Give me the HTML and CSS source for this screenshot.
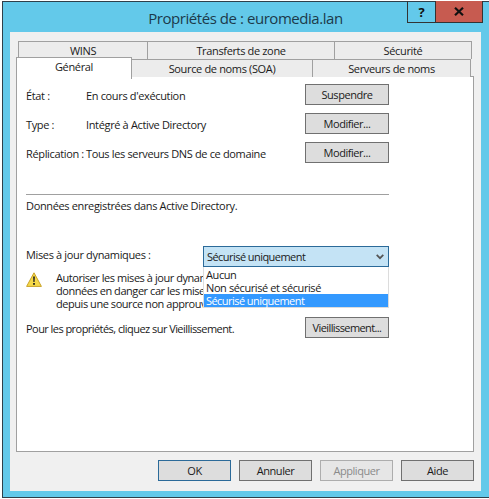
FILE: index.html
```html
<!DOCTYPE html>
<html lang="fr">
<head>
    <meta charset="UTF-8">
    <meta name="viewport" content="width=device-width, initial-scale=1.0">
    <title>Propriétés de : euromedia.lan</title>
    <link rel="stylesheet" href="styles.css">
</head>
<body>
    <div class="window">
        <div class="titlebar">
            <div class="title">Propriétés de : euromedia.lan</div>
            <div class="controls">
                <div class="ctl ctl-help">?</div>
                <div class="ctl ctl-close">
                    <svg width="10" height="9" viewBox="0 0 10 9"><path d="M1 0.8 L9 8.2 M9 0.8 L1 8.2" stroke="#111" stroke-width="2.2" fill="none"/></svg>
                </div>
            </div>
        </div>

        <div class="panel">
            <div class="tabs">
                <div class="tab-row tab-row-back">
                    <div class="tab t-wins">WINS</div>
                    <div class="tab t-transfer">Transferts de zone</div>
                    <div class="tab t-secu">Sécurité</div>
                </div>
                <div class="tab-row">
                    <div class="tab tab-active">Général</div>
                    <div class="tab t-soa">Source de noms (SOA)</div>
                    <div class="tab t-ns">Serveurs de noms</div>
                </div>
            </div>

            <div class="pane">
                <div class="row">
                    <div class="info"><span class="label">État :</span><span>En cours d'exécution</span></div>
                    <button class="btn">Suspendre</button>
                </div>
                <div class="row">
                    <div class="info"><span class="label">Type :</span><span>Intégré à Active Directory</span></div>
                    <button class="btn">Modifier...</button>
                </div>
                <div class="row">
                    <div class="info"><span class="label">Réplication :</span><span>Tous les serveurs DNS de ce domaine</span></div>
                    <button class="btn">Modifier...</button>
                </div>

                <div class="separator"></div>
                <div class="stored">Données enregistrées dans Active Directory.</div>

                <div class="update-row">
                    <span>Mises à jour dynamiques :</span>
                    <div class="combo">
                        <div class="combo-box">
                            <span>Sécurisé uniquement</span>
                            <svg width="8" height="6" viewBox="0 0 8 6"><path d="M0.7 0.8 L4 4.2 L7.3 0.8" stroke="#555" stroke-width="1.7" fill="none"/></svg>
                        </div>
                        <div class="combo-list">
                            <div class="opt">Aucun</div>
                            <div class="opt">Non sécurisé et sécurisé</div>
                            <div class="opt opt-selected">Sécurisé uniquement</div>
                        </div>
                    </div>
                </div>

                <div class="warning">
                    <svg class="warn-icon" width="16" height="15" viewBox="0 0 16 15">
                        <path d="M8 0.8 L15.4 14.4 L0.6 14.4 Z" fill="#f5d94a" stroke="#c9a227" stroke-width="1" stroke-linejoin="round"/>
                        <path d="M7.1 4.6 H8.9 L8.6 10 H7.4 Z" fill="#222"/>
                        <rect x="7.1" y="11" width="1.8" height="1.8" fill="#222"/>
                    </svg>
                    <p>Autoriser les mises à jour dynam<br>données en danger car les mise<br>depuis une source non approuv</p>
                </div>

                <div class="row row-aging">
                    <div class="info info-aging">Pour les propriétés, cliquez sur Vieillissement.</div>
                    <button class="btn btn-aging">Vieillissement...</button>
                </div>
            </div>

            <div class="actions">
                <button class="btn btn-action btn-default">OK</button>
                <button class="btn btn-action">Annuler</button>
                <button class="btn btn-action btn-disabled">Appliquer</button>
                <button class="btn btn-action">Aide</button>
            </div>
        </div>
    </div>
</body>
</html>
```

FILE: styles.css
```css
html, body {
    margin: 0;
    height: 100%;
    overflow: hidden;
    background-color: #fff;
}

body {
    font-family: "Open Sans", "Noto Sans", sans-serif;
    font-size: 11px;
    letter-spacing: -0.35px;
    color: #1a1a1a;
}

.window {
    box-sizing: border-box;
    width: 487px;
    height: 497px;
    margin: 1px 0 0 2px;
    border: 1px solid #2f3f4a;
    border-right: 0;
    background-color: #63c9ea;
    padding: 0 8px 6px 7px;
    display: flex;
    flex-direction: column;
}

/* barre de titre */
.titlebar {
    height: 30px;
    flex: none;
    position: relative;
    display: flex;
    align-items: center;
    justify-content: center;
}

.title {
    font-size: 15px;
    letter-spacing: -0.45px;
    color: #1c3a4a;
    padding-top: 1px;
}

.controls {
    position: absolute;
    top: -1px;
    right: -2px;
    display: flex;
    height: 22px;
    box-sizing: border-box;
    border: 1px solid #333;
    border-top: 0;
}

.ctl {
    display: flex;
    align-items: center;
    justify-content: center;
    font-weight: bold;
    font-size: 13px;
    color: #111;
}

.ctl-help {
    width: 27px;
    border-right: 1px solid #333;
}

.ctl-close {
    width: 46px;
    background-color: #c75b50;
}

/* contenu */
.panel {
    flex: 1;
    background-color: #f0f0f0;
    padding: 9px 7px 0 6px;
    display: flex;
    flex-direction: column;
}

.tab-row {
    display: flex;
    height: 18px;
    position: relative;
}

.tab-row-back {
    margin-left: 2px;
}

.tab {
    box-sizing: border-box;
    background-color: #ececec;
    border: 1px solid #a0a0a0;
    border-bottom: 0;
    border-right: 0;
    text-align: center;
    line-height: 18px;
}

.t-wins { width: 129px; }
.t-transfer { width: 187px; }
.t-secu { width: 138px; border-right: 1px solid #a0a0a0; }
.t-soa { width: 181px; }
.t-ns { width: 159px; border-right: 1px solid #a0a0a0; }

.tab-active {
    width: 116px;
    height: 22px;
    margin-top: -2px;
    background-color: #fff;
    border-right: 1px solid #a0a0a0;
    margin-right: -1px;
    position: relative;
    z-index: 1;
    line-height: 18px;
}

.pane {
    box-sizing: border-box;
    flex: none;
    height: 376px;
    margin-top: -1px;
    background-color: #fff;
    border: 1px solid #a0a0a0;
    padding: 7px 84px 0 9px;
}

.row {
    display: flex;
    justify-content: space-between;
    align-items: center;
    height: 21px;
    margin-bottom: 8px;
}

.info {
    display: flex;
    padding-top: 1px;
    white-space: nowrap;
}

.info-aging {
    letter-spacing: -0.55px;
}

.label {
    width: 60px;
    flex: none;
}

.btn {
    box-sizing: border-box;
    width: 84px;
    height: 21px;
    padding: 0;
    background-color: #dddddd;
    border: 1px solid #707070;
    font-family: inherit;
    font-size: 11px;
    letter-spacing: -0.45px;
    color: #1a1a1a;
}

.btn-aging {
    letter-spacing: -0.6px;
}

.separator {
    height: 1px;
    background-color: #a0a0a0;
    margin-top: 31px;
}

.stored {
    margin-top: 3px;
    line-height: 15px;
}

.update-row {
    display: flex;
    justify-content: space-between;
    margin-top: 33px;
    line-height: 17px;
}

.combo {
    position: relative;
    width: 186px;
}

.combo-box {
    box-sizing: border-box;
    height: 21px;
    background-color: #c4e3f5;
    border: 1px solid #2b6a99;
    display: flex;
    align-items: center;
    justify-content: space-between;
    padding: 0 4px 0 3px;
    letter-spacing: -0.55px;
}

.combo-list {
    position: absolute;
    left: 0;
    right: 0;
    top: 21px;
    box-sizing: border-box;
    height: 41px;
    padding-top: 1px;
    background-color: #fff;
    border: 1px solid #dcdcdc;
    border-top: 0;
    z-index: 2;
}

.opt {
    height: 13px;
    line-height: 13px;
    padding-left: 2px;
    letter-spacing: -0.4px;
}

.opt-selected {
    background-color: #3399ff;
    color: #fff;
    letter-spacing: -0.55px;
}

.warning {
    display: flex;
    margin-top: 4px;
}

.warn-icon {
    flex: none;
    margin: 1px 14px 0 0;
}

.warning p {
    margin: 0;
    line-height: 13px;
    white-space: nowrap;
    letter-spacing: -0.45px;
}

.row-aging {
    margin-top: 7px;
}

.actions {
    display: flex;
    justify-content: flex-end;
    gap: 8px;
    margin-top: 8px;
}

.btn-action {
    width: 73px;
}

.btn-default {
    border-color: #2b6a99;
}

.btn-disabled {
    background-color: #e6e6e6;
    border-color: #adadad;
    color: #8a8a8a;
}
```
